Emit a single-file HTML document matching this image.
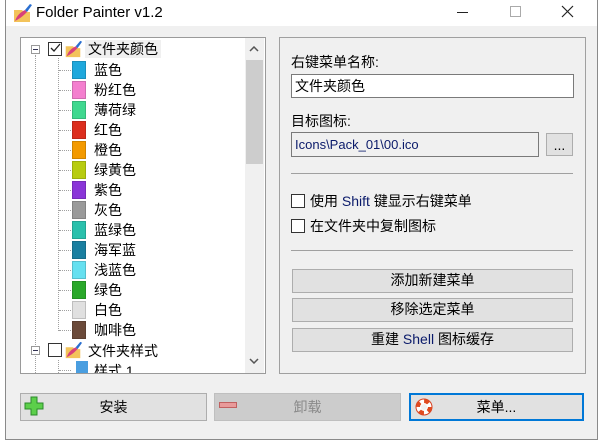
<!DOCTYPE html>
<html><head><meta charset="utf-8"><style>
*{box-sizing:border-box;margin:0;padding:0}
body{width:600px;height:441px;background:#fff;font-family:"Liberation Sans","Noto Sans CJK SC",sans-serif;font-size:14px;color:#000;position:relative;overflow:hidden}
.a{position:absolute}
#win{left:5px;top:0;width:593px;height:440px;border-left:1px solid #8a8a8a;border-right:1px solid #8a8a8a;border-bottom:1px solid #8a8a8a}
#client{left:6px;top:26px;width:591px;height:413px;background:#f0f0f0}
.t{white-space:nowrap;line-height:18px}
.sw{width:14px;height:18px;border:1px solid rgba(0,0,0,.15)}
.dot{border-top:1px dotted #a0a0a0;height:0}
.vdot{border-left:1px dotted #a0a0a0;width:0}
.btn{background:#e1e1e1;border:1px solid #adadad;text-align:center;line-height:20px;font-size:14px}
.cb{width:14px;height:14px;border:1px solid #333;background:#fff}
</style></head><body>
<div class="a" id="win"></div>
<div class="a" id="client"></div>
<!-- title -->
<svg class="a" style="left:11px;top:2px" width="22" height="22" viewBox="0 0 22 22"><path d="M3 8h8l2 2h6v10H3z" fill="#f3c35a"/><path d="M4 19c2-6 6-9 10-11l2 2c-3 3-6 6-12 9z" fill="#d8407a"/><path d="M14 8l5-6 2 1-5 7z" fill="#2a6fd0"/></svg>
<div class="a t" style="left:36px;top:4px;font-size:15px;color:#000">Folder Painter v1.2</div>
<div class="a" style="left:457px;top:12px;width:11px;height:1px;background:#222"></div>
<div class="a" style="left:510px;top:6px;width:11px;height:11px;border:1px solid #aaa"></div>
<svg class="a" style="left:561px;top:5px" width="13" height="13"><path d="M1 1L12 12M12 1L1 12" stroke="#222" stroke-width="1.2"/></svg>
<!-- tree -->
<div class="a" style="left:20px;top:37px;width:246px;height:337px;border:1px solid #9a9a9a;background:#fff;overflow:hidden">
 <div class="a" style="left:224px;top:0;width:19px;height:335px;background:#f0f0f0"></div>
 <div class="a" style="left:225px;top:22px;width:17px;height:104px;background:#cdcdcd"></div>
 <svg class="a" style="left:228px;top:8px" width="10" height="6"><path d="M1 5L5 1L9 5" stroke="#555" fill="none" stroke-width="1.5"/></svg>
 <svg class="a" style="left:228px;top:320px" width="10" height="6"><path d="M1 1L5 5L9 1" stroke="#555" fill="none" stroke-width="1.5"/></svg>
 <div class="a vdot" style="left:14px;top:17px;height:320px"></div>
 <div class="a vdot" style="left:37px;top:20px;height:273px"></div>
 <div class="a vdot" style="left:37px;top:322px;height:15px"></div>
 <!-- row 1 -->
 <div class="a" style="left:10px;top:7px;width:9px;height:9px;border:1px solid #999;background:#fff"><div style="margin:3px 1px;height:1px;background:#335"></div></div>
 <div class="a cb" style="left:27px;top:4px"></div>
 <svg class="a" style="left:29px;top:5px" width="11" height="11"><path d="M1 5l3 3 6-7" stroke="#222" fill="none" stroke-width="1.3"/></svg>
 <svg class="a" style="left:42px;top:1px" width="20" height="20" viewBox="0 0 22 22"><path d="M3 8h8l2 2h6v10H3z" fill="#f3c35a"/><path d="M4 19c2-6 6-9 10-11l2 2c-3 3-6 6-12 9z" fill="#d8407a"/><path d="M14 8l5-6 2 1-5 7z" fill="#2a6fd0"/></svg>
 <div class="a t" style="left:64px;top:2px;background:#f0f0f0;padding:0 3px">文件夹颜色</div>
 <!-- colors -->
 <div class="a dot" style="left:38px;top:32px;width:12px"></div><div class="a sw" style="left:51px;top:23px;background:#1fa8dc"></div><div class="a t" style="left:73px;top:23px">蓝色</div>
 <div class="a dot" style="left:38px;top:52px;width:12px"></div><div class="a sw" style="left:51px;top:43px;background:#f47fcf"></div><div class="a t" style="left:73px;top:43px">粉红色</div>
 <div class="a dot" style="left:38px;top:72px;width:12px"></div><div class="a sw" style="left:51px;top:63px;background:#3fd88f"></div><div class="a t" style="left:73px;top:63px">薄荷绿</div>
 <div class="a dot" style="left:38px;top:92px;width:12px"></div><div class="a sw" style="left:51px;top:83px;background:#dc2e1e"></div><div class="a t" style="left:73px;top:83px">红色</div>
 <div class="a dot" style="left:38px;top:112px;width:12px"></div><div class="a sw" style="left:51px;top:103px;background:#f39a00"></div><div class="a t" style="left:73px;top:103px">橙色</div>
 <div class="a dot" style="left:38px;top:132px;width:12px"></div><div class="a sw" style="left:51px;top:123px;background:#b8cc10"></div><div class="a t" style="left:73px;top:123px">绿黄色</div>
 <div class="a dot" style="left:38px;top:152px;width:12px"></div><div class="a sw" style="left:51px;top:143px;background:#8a36d8"></div><div class="a t" style="left:73px;top:143px">紫色</div>
 <div class="a dot" style="left:38px;top:172px;width:12px"></div><div class="a sw" style="left:51px;top:163px;background:#9a9a9a"></div><div class="a t" style="left:73px;top:163px">灰色</div>
 <div class="a dot" style="left:38px;top:192px;width:12px"></div><div class="a sw" style="left:51px;top:183px;background:#2ac0ac"></div><div class="a t" style="left:73px;top:183px">蓝绿色</div>
 <div class="a dot" style="left:38px;top:212px;width:12px"></div><div class="a sw" style="left:51px;top:203px;background:#1a7fa0"></div><div class="a t" style="left:73px;top:203px">海军蓝</div>
 <div class="a dot" style="left:38px;top:232px;width:12px"></div><div class="a sw" style="left:51px;top:223px;background:#66e0f0"></div><div class="a t" style="left:73px;top:223px">浅蓝色</div>
 <div class="a dot" style="left:38px;top:252px;width:12px"></div><div class="a sw" style="left:51px;top:243px;background:#2aa82a"></div><div class="a t" style="left:73px;top:243px">绿色</div>
 <div class="a dot" style="left:38px;top:272px;width:12px"></div><div class="a sw" style="left:51px;top:263px;background:#e0e0e0"></div><div class="a t" style="left:73px;top:263px">白色</div>
 <div class="a dot" style="left:38px;top:292px;width:12px"></div><div class="a sw" style="left:51px;top:283px;background:#6b4a3a"></div><div class="a t" style="left:73px;top:283px">咖啡色</div>
 <!-- row 2 -->
 <div class="a" style="left:10px;top:308px;width:9px;height:9px;border:1px solid #999;background:#fff"><div style="margin:3px 1px;height:1px;background:#335"></div></div>
 <div class="a cb" style="left:27px;top:305px"></div>
 <svg class="a" style="left:42px;top:302px" width="20" height="20" viewBox="0 0 22 22"><path d="M3 8h8l2 2h6v10H3z" fill="#f3c35a"/><path d="M4 19c2-6 6-9 10-11l2 2c-3 3-6 6-12 9z" fill="#d8407a"/><path d="M14 8l5-6 2 1-5 7z" fill="#2a6fd0"/></svg>
 <div class="a t" style="left:67px;top:304px">文件夹样式</div>
 <div class="a dot" style="left:38px;top:332px;width:12px"></div><div class="a" style="left:55px;top:323px;width:12px;height:14px;background:#4a9ee0"></div><div class="a t" style="left:73px;top:324px">样式 1</div>
</div>
<!-- right group -->
<div class="a" style="left:279px;top:37px;width:307px;height:337px;border:1px solid #a0a0a0"></div>
<div class="a t" style="left:291px;top:53px">右键菜单名称:</div>
<div class="a" style="left:291px;top:74px;width:283px;height:24px;border:1px solid #7a7a7a;background:#fff"></div>
<div class="a t" style="left:295px;top:77px">文件夹颜色</div>
<div class="a t" style="left:291px;top:112px">目标图标:</div>
<div class="a" style="left:291px;top:132px;width:248px;height:25px;border:1px solid #7a7a7a;background:#f0f0f0"></div>
<div class="a t" style="left:295px;top:136px;font-size:13px;color:#0a1a6a">Icons\Pack_01\00.ico</div>
<div class="a btn" style="left:546px;top:133px;width:27px;height:23px;line-height:22px">...</div>
<div class="a" style="left:291px;top:173px;width:282px;height:1px;background:#a0a0a0"></div>
<div class="a cb" style="left:291px;top:194px;border-color:#333"></div>
<div class="a t" style="left:310px;top:192px">使用 <span style="color:#0a1a6a">Shift</span> 键显示右键菜单</div>
<div class="a cb" style="left:291px;top:219px"></div>
<div class="a t" style="left:310px;top:217px">在文件夹中复制图标</div>
<div class="a" style="left:291px;top:250px;width:282px;height:1px;background:#a0a0a0"></div>
<div class="a btn" style="left:292px;top:269px;width:281px;height:24px">添加新建菜单</div>
<div class="a btn" style="left:292px;top:298px;width:281px;height:24px">移除选定菜单</div>
<div class="a btn" style="left:292px;top:328px;width:281px;height:24px">重建 <span style="color:#0a1a6a">Shell</span> 图标缓存</div>
<!-- bottom buttons -->
<div class="a btn" style="left:20px;top:393px;width:187px;height:28px;line-height:26px">安装</div>
<svg class="a" style="left:24px;top:396px" width="20" height="20"><path d="M7 1h6v6h6v6h-6v6H7v-6H1V7h6z" fill="#5ccf4a" stroke="#2a8a2a"/></svg>
<div class="a btn" style="left:214px;top:393px;width:187px;height:28px;line-height:26px;background:#cccccc;border-color:#bfbfbf;color:#8a8a8a">卸载</div>
<div class="a" style="left:219px;top:402px;width:18px;height:6px;background:#e89a9a;border:1px solid #c06060"></div>
<div class="a btn" style="left:409px;top:393px;width:175px;height:28px;line-height:24px;border:2px solid #0078d7">菜单...</div>
<svg class="a" style="left:414px;top:397px" width="20" height="20"><circle cx="10" cy="10" r="8" fill="#fff" stroke="#d84020" stroke-width="1"/><circle cx="10" cy="10" r="6" fill="none" stroke="#e04a20" stroke-width="4" stroke-dasharray="5 4.4"/><circle cx="10" cy="10" r="3" fill="#f0f0f0"/></svg>
</body></html>
